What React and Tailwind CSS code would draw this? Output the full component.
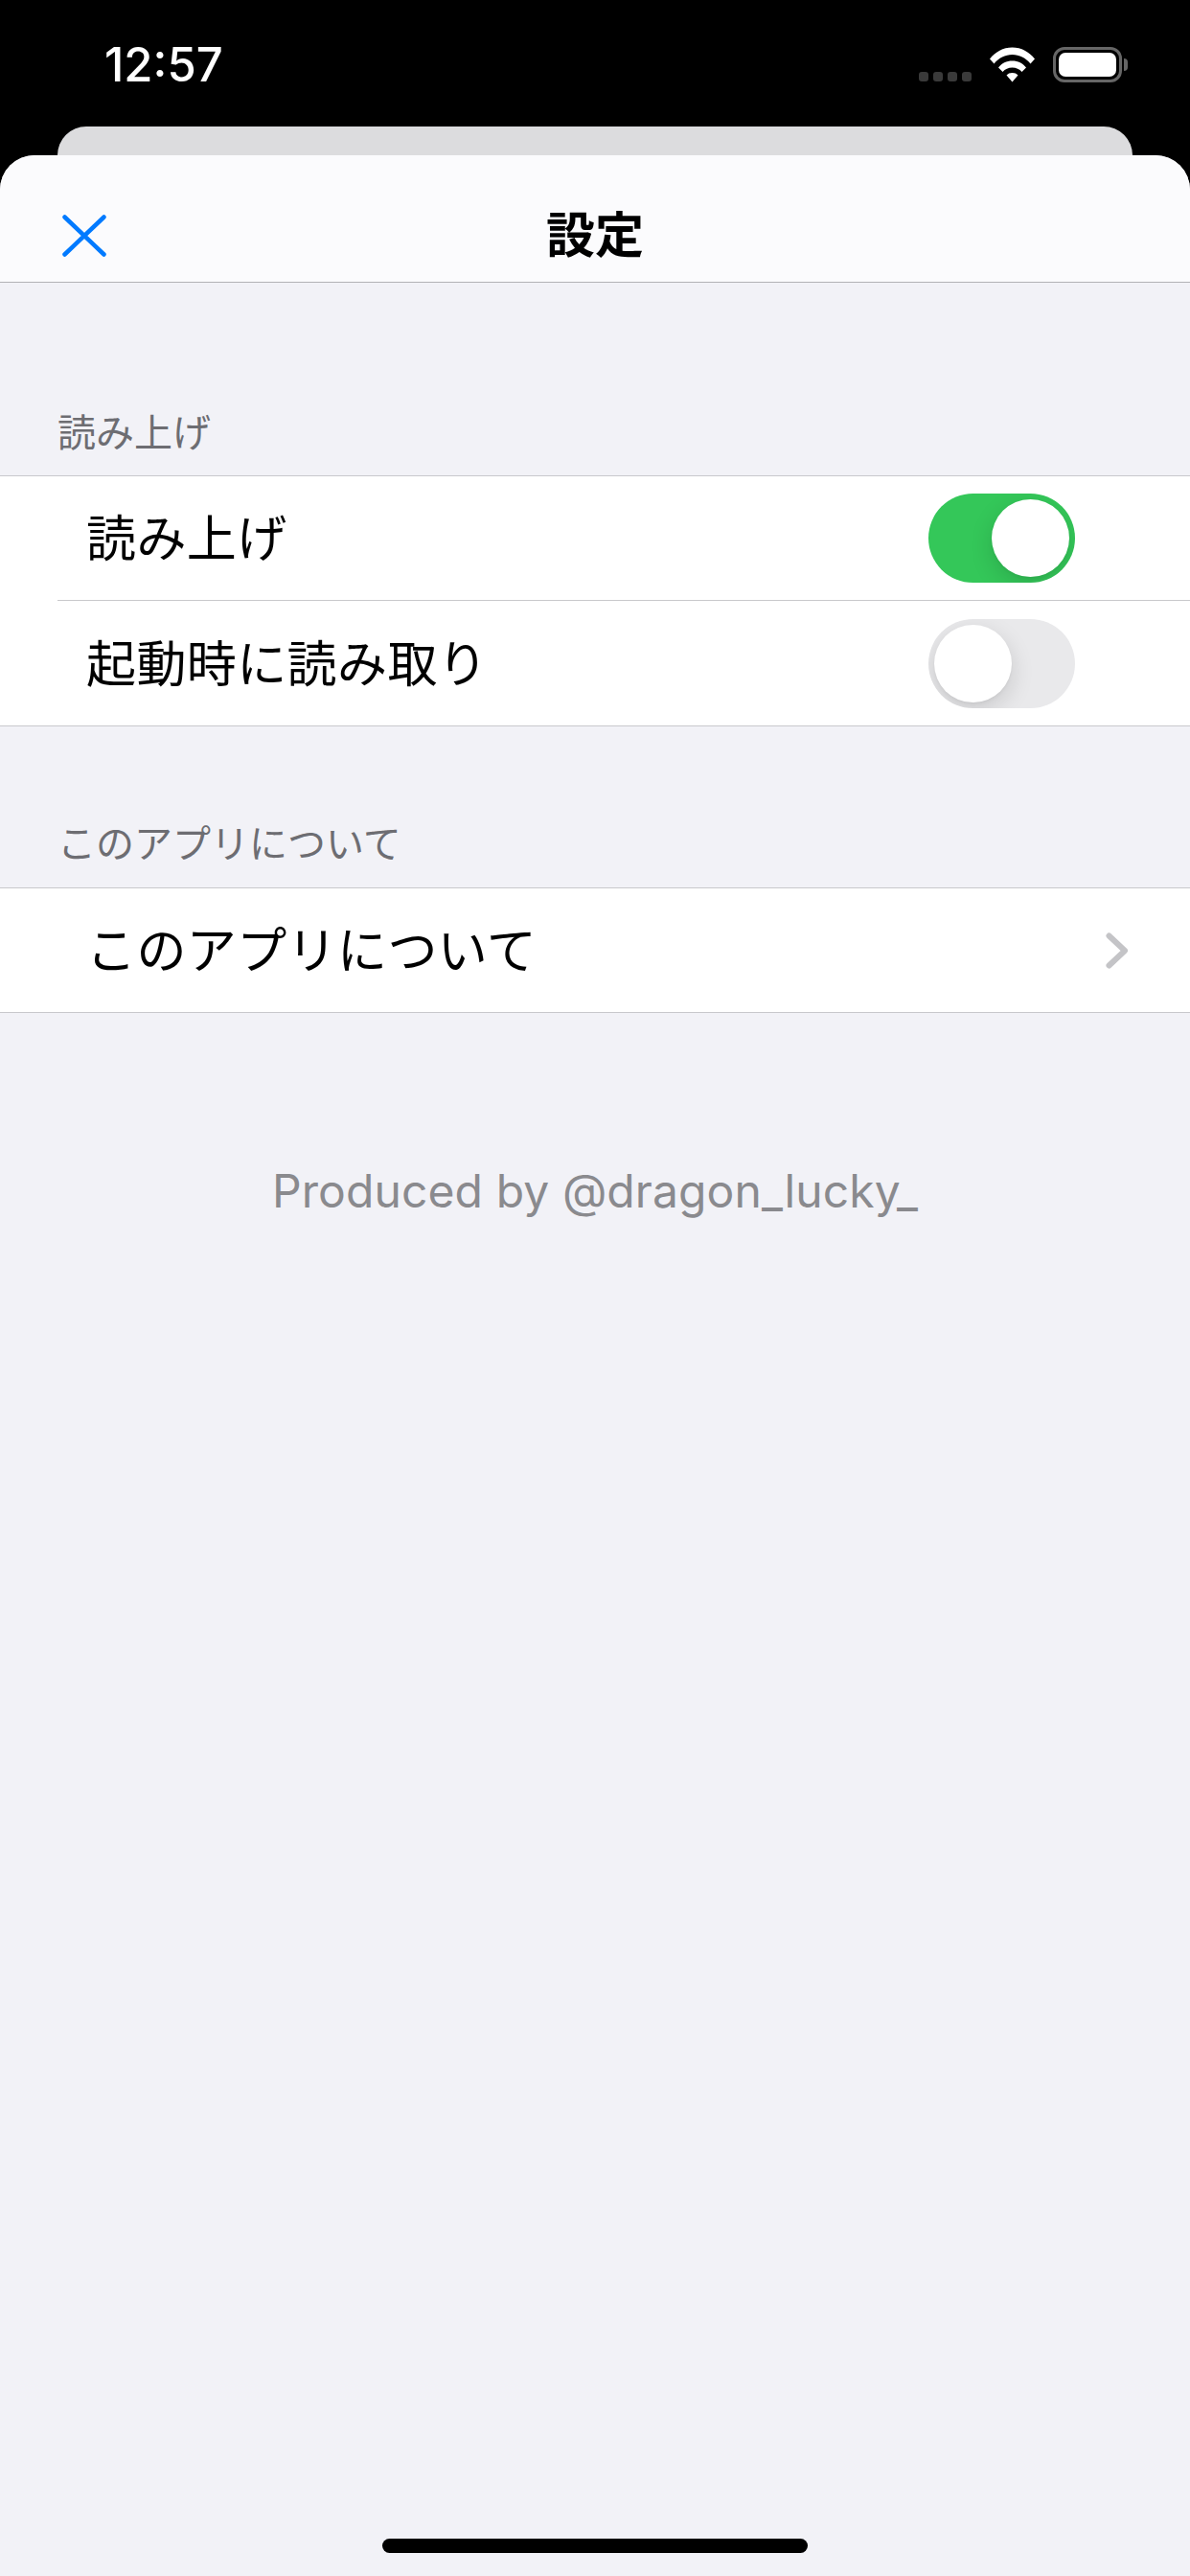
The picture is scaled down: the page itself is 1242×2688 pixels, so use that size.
import React from 'react';

const jp = 'font-["Inter","Noto_Sans_CJK_JP",sans-serif]';

const Toggle = ({ on }) => (
  <div
    className={`w-[153px] h-[93px] rounded-full p-[6px] flex overflow-hidden ${
      on ? 'bg-[#34c759] justify-end' : 'bg-[#e9e9eb] justify-start'
    }`}
  >
    <div className="w-[81px] h-[81px] rounded-full bg-white shadow-[0_8px_24px_rgba(0,0,0,0.14),0_2px_3px_rgba(0,0,0,0.04)]" />
  </div>
);

const WifiIcon = () => (
  <svg width="47" height="37" viewBox="0 0 47 37" fill="#fff">
    <path d="M0 12.5C6 5 14 0.5 23.5 0.5S41 5 47 12.5L42.5 17.5C37.5 11.5 31 8 23.5 8S9.500 11.500 4.500 17.500Z" />
    <path d="M9 21.500C12.500 17 17.500 14.500 23.500 14.500S34.500 17 38 21.500L33.500 26C31 23.200 27.500 21.500 23.500 21.500S16 23.200 13.500 26Z" />
    <path d="M17.500 29.500C19 27.800 21 27 23.500 27S28 27.800 29.500 29.500L23.500 36.500Z" />
  </svg>
);

const Battery = () => (
  <div className="flex items-center gap-[2px]">
    <div className="w-[72px] h-[37px] rounded-[12px] border-[3px] border-[#666666] p-[3px] flex">
      <div className="flex-1 rounded-[7px] bg-white" />
    </div>
    <div className="w-[4px] h-[13px] rounded-r-full bg-[#666666]" />
  </div>
);

const StatusBar = () => (
  <div className="h-[132px] flex justify-between pl-[109px] pr-[65px] pt-[49px]">
    <span className="text-white text-[49px] leading-[37px] font-medium font-['Inter',sans-serif]">
      12:57
    </span>
    <div className="flex items-start">
      <div className="flex gap-[5px] mt-[26px] mr-[19px]">
        {[0, 1, 2, 3].map(i => (
          <div key={i} className="w-[10px] h-[10px] rounded-[3px] bg-[#3a3a3a]" />
        ))}
      </div>
      <div className="mr-[19px]">
        <WifiIcon />
      </div>
      <Battery />
    </div>
  </div>
);

const SectionLabel = ({ className, children }) => (
  <div className={`pl-[60px] text-[40px] leading-[54px] text-[#6d6d72] ${className}`}>{children}</div>
);

const RowLabel = ({ children }) => (
  <span className="text-[52px] tracking-[0.4px] text-black pt-[3px]">{children}</span>
);

const App = () => {
  return (
    <div className={`w-[1242px] h-[2688px] bg-black flex flex-col overflow-hidden ${jp}`}>
      <StatusBar />
      <div className="h-[30px] mx-[60px] rounded-t-[30px] bg-[#dcdcde]" />

      <div className="flex-1 flex flex-col rounded-t-[36px] overflow-hidden bg-[#f2f2f7]">
        {/* Header */}
        <div className="h-[133px] shrink-0 flex items-center justify-center relative bg-[#fbfbfd] border-b border-[#b2b2b6]">
          <svg
            className="absolute left-[65px] top-[62px]"
            width="46"
            height="44"
            viewBox="0 0 46 44"
            fill="none"
            stroke="#007aff"
            strokeWidth="4.500"
            strokeLinecap="round"
          >
            <path d="M2.500 2.500L43.500 41.500M43.500 2.500L2.500 41.500" />
          </svg>
          <span className="text-[51px] font-bold text-black leading-none pt-[34px]">設定</span>
        </div>

        {/* Speech section */}
        <SectionLabel className="pt-[130px] pb-[17px]">読み上げ</SectionLabel>
        <div className="bg-white border-y border-[#c8c8cc]">
          <div className="h-[129px] flex items-center justify-between pl-[90px] pr-[120px]">
            <RowLabel>読み上げ</RowLabel>
            <Toggle on />
          </div>
          <div className="ml-[60px] h-px bg-[#c8c8cc]" />
          <div className="h-[130px] flex items-center justify-between pl-[90px] pr-[120px]">
            <RowLabel>起動時に読み取り</RowLabel>
            <Toggle />
          </div>
        </div>

        {/* About section */}
        <SectionLabel className="pt-[96px] pb-[18px]">このアプリについて</SectionLabel>
        <div className="h-[131px] bg-white border-y border-[#c8c8cc] flex items-center justify-between pl-[90px] pr-[64px]">
          <RowLabel>このアプリについて</RowLabel>
          <svg
            width="24"
            height="38"
            viewBox="0 0 24 38"
            fill="none"
            stroke="#c4c4c7"
            strokeWidth="6"
            strokeLinecap="round"
            strokeLinejoin="round"
          >
            <path d="M3.500 3.500L20 19L3.500 34.500" />
          </svg>
        </div>

        <div className="mt-[158px] text-center text-[48px] tracking-[0.1px] leading-[56px] text-[#8a8a8e]">
          Produced by @dragon_lucky_
        </div>

        {/* Home indicator */}
        <div className="mt-auto mb-[24px] mx-auto w-[444px] h-[15px] rounded-full bg-black" />
      </div>
    </div>
  );
};

export default App;
